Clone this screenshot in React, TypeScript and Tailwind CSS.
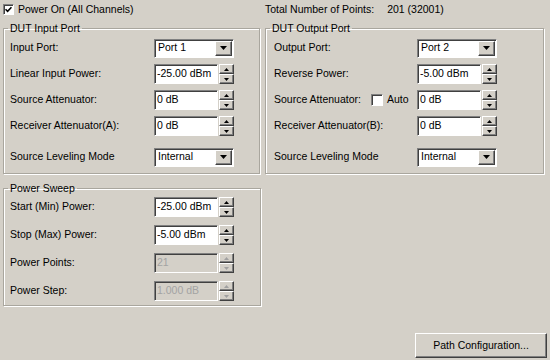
import type { ReactNode } from "react"

const sunken = "border border-t-[#808080] border-l-[#808080] border-b-white border-r-white shadow-[inset_1px_1px_0_#404040]"
const raised = "border border-t-white border-l-white border-b-[#404040] border-r-[#404040] shadow-[inset_-1px_-1px_0_#808080]"

function Arrow({ up, disabled }: { up?: boolean; disabled?: boolean }) {
  return (
    <svg width="5" height="3" viewBox="0 0 5 3" className="block">
      <path d={up ? "M2.5 0L5 3H0z" : "M0 0h5L2.5 3z"} fill={disabled ? "#a0a0a0" : "#000"} />
    </svg>
  )
}

function Spin({ value, disabled }: { value: string; disabled?: boolean }) {
  return (
    <div className="flex h-[20px] items-stretch gap-[1px]">
      <div
        className={`${sunken} flex w-[64px] items-center pl-[2px] ${disabled ? "bg-[#d4d0c8] text-[#a3a3a3]" : "bg-white"}`}
      >
        {value}
      </div>
      <div className="flex w-[15px] flex-col">
        <div className={`${raised} flex flex-1 items-center justify-center bg-[#d4d0c8]`}>
          <Arrow up disabled={disabled} />
        </div>
        <div className={`${raised} flex flex-1 items-center justify-center bg-[#d4d0c8]`}>
          <Arrow disabled={disabled} />
        </div>
      </div>
    </div>
  )
}

function Select({ value }: { value: string }) {
  return (
    <div className={`${sunken} flex h-[19px] w-[80px] items-stretch bg-white p-[1px]`}>
      <div className="flex flex-1 items-center pl-[2px]">{value}</div>
      <div className={`${raised} flex w-[17px] items-center justify-center bg-[#d4d0c8]`}>
        <svg width="7" height="4" viewBox="0 0 7 4" className="block">
          <path d="M0 0h7L3.5 4z" fill="#000" />
        </svg>
      </div>
    </div>
  )
}

function Row({ label, labelWidth, children, extra }: { label: string; labelWidth: string; children: ReactNode; extra?: ReactNode }) {
  return (
    <div className="flex h-[20px] items-center">
      <div className={`${labelWidth} flex shrink-0 items-center`}>
        <span>{label}</span>
        {extra}
      </div>
      {children}
    </div>
  )
}

function Group({ title, className, children }: { title: string; className: string; children: ReactNode }) {
  return (
    <fieldset
      className={`${className} border border-[#a9a69e] px-0 shadow-[inset_1px_1px_0_#fff,1px_1px_0_#fff]`}
    >
      <legend className="ml-[4px] px-[2px] leading-[12px]">{title}</legend>
      {children}
    </fieldset>
  )
}

export default function App() {
  return (
    <div className="flex h-[360px] w-[550px] flex-col bg-[#d4d0c8] pl-[3px] font-['Liberation_Sans',Arial,sans-serif] text-[10.5px] text-black">
      {/* top line */}
      <div className="flex h-[22px] items-start pt-[3px]">
        <div className="flex w-[262px] items-center gap-[4px]">
          <div className={`${sunken} flex h-[11px] w-[11px] items-center justify-center bg-white`}>
            <svg width="7" height="7" viewBox="0 0 7 7" className="block">
              <path d="M0.5 3.2L2.6 5.3L6.5 1.2" stroke="#000" strokeWidth="1.6" fill="none" />
            </svg>
          </div>
          <span className="leading-[12px]">Power On (All Channels)</span>
        </div>
        <span className="leading-[12px]">Total Number of Points:</span>
        <span className="ml-[13px] leading-[12px]">201 (32001)</span>
      </div>

      <div className="flex gap-[5px]">
        <Group title="DUT Input Port" className="w-[257px]">
          <div className="flex flex-col gap-[6px] pb-[6px] pl-[6px] pt-[4px]">
            <Row label="Input Port:" labelWidth="w-[144px]">
              <Select value="Port 1" />
            </Row>
            <Row label="Linear Input Power:" labelWidth="w-[144px]">
              <Spin value="-25.00 dBm" />
            </Row>
            <Row label="Source Attenuator:" labelWidth="w-[144px]">
              <Spin value="0 dB" />
            </Row>
            <Row label="Receiver Attenuator(A):" labelWidth="w-[144px]">
              <Spin value="0 dB" />
            </Row>
            <div className="mt-[5px]">
              <Row label="Source Leveling Mode" labelWidth="w-[144px]">
                <Select value="Internal" />
              </Row>
            </div>
          </div>
        </Group>

        <Group title="DUT Output Port" className="w-[279px]">
          <div className="flex flex-col gap-[6px] pb-[6px] pl-[8px] pt-[4px]">
            <Row label="Output Port:" labelWidth="w-[143px]">
              <Select value="Port 2" />
            </Row>
            <Row label="Reverse Power:" labelWidth="w-[143px]">
              <Spin value="-5.00 dBm" />
            </Row>
            <Row
              label="Source Attenuator:"
              labelWidth="w-[143px]"
              extra={
                <div className="ml-[10px] flex items-center gap-[4px]">
                  <div className={`${sunken} h-[12px] w-[12px] bg-white`} />
                  <span>Auto</span>
                </div>
              }
            >
              <Spin value="0 dB" />
            </Row>
            <Row label="Receiver Attenuator(B):" labelWidth="w-[143px]">
              <Spin value="0 dB" />
            </Row>
            <div className="mt-[5px]">
              <Row label="Source Leveling Mode" labelWidth="w-[143px]">
                <Select value="Internal" />
              </Row>
            </div>
          </div>
        </Group>
      </div>

      <Group title="Power Sweep" className="mt-[8px] w-[258px]">
        <div className="flex flex-col gap-[8px] pb-[4px] pl-[6px] pt-[3px]">
          <Row label="Start (Min) Power:" labelWidth="w-[144px]">
            <Spin value="-25.00 dBm" />
          </Row>
          <Row label="Stop (Max) Power:" labelWidth="w-[144px]">
            <Spin value="-5.00 dBm" />
          </Row>
          <Row label="Power Points:" labelWidth="w-[144px]">
            <Spin value="21" disabled />
          </Row>
          <Row label="Power Step:" labelWidth="w-[144px]">
            <Spin value="1.000 dB" disabled />
          </Row>
        </div>
      </Group>

      <div className="mt-auto flex justify-end pb-[2px] pr-[3px]">
        <button className={`${raised} h-[25px] w-[132px] bg-[#d4d0c8] text-center`}>Path Configuration...</button>
      </div>
    </div>
  )
}
